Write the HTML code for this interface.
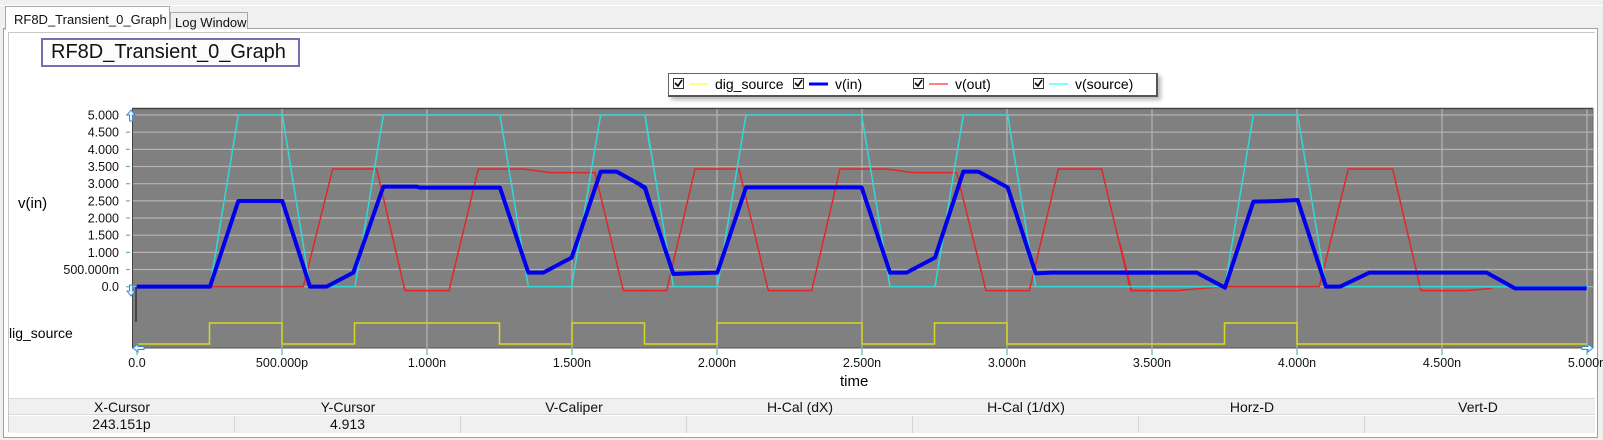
<!DOCTYPE html>
<html><head><meta charset="utf-8"><style>
*{margin:0;padding:0;box-sizing:border-box}
body{width:1603px;height:440px;background:#f0f0f0;position:relative;overflow:hidden;font-family:"Liberation Sans",sans-serif;color:#111}
.a{position:absolute}
</style></head><body>
<div class="a" style="left:0;top:5px;width:1603px;height:1px;background:#fff"></div>
<div class="a" style="left:3px;top:28px;width:1595px;height:410px;border:1px solid #a0a0a0;background:#fff"></div>
<div class="a" style="left:8px;top:32px;width:1587px;height:1px;background:#c8c8c8"></div>
<div class="a" style="left:8px;top:32px;width:1px;height:400px;background:#c8c8c8"></div>
<!-- tabs -->
<div class="a" style="left:5px;top:6px;width:165px;height:24px;background:#fff;border:1px solid #a8a8a8;border-bottom:none;font-size:13px;padding:5px 0 0 8px">RF8D_Transient_0_Graph</div>
<div class="a" style="left:170px;top:12px;width:78px;height:17px;background:#f0f0f0;border:1px solid #a8a8a8;border-bottom:none;font-size:13px;padding:2px 0 0 4px">Log Window</div>
<!-- title -->
<div class="a" style="left:41px;top:38px;width:259px;height:29px;border:2px solid #7070b0;font-size:20px;padding:1px 0 0 8px;background:#fcfcfc">RF8D_Transient_0_Graph</div>
<!-- legend -->
<div class="a" style="left:668px;top:73px;width:490px;height:24px;border:1px solid #666;border-right:2px solid #555;border-bottom:2px solid #555;box-shadow:3px 3px 4px #bbb;background:#fff;font-size:13px">
<svg width="490" height="22" style="position:absolute;left:0;top:0">
<g fill="#fff" stroke="#333"><rect x="4.5" y="4.5" width="10" height="10"/><rect x="124.5" y="4.5" width="10" height="10"/><rect x="244.5" y="4.5" width="10" height="10"/><rect x="364.5" y="4.5" width="10" height="10"/></g>
<g fill="none" stroke="#000" stroke-width="1.6"><path d="M6 9l3 3 4-6"/><path d="M126 9l3 3 4-6"/><path d="M246 9l3 3 4-6"/><path d="M366 9l3 3 4-6"/></g>
<line x1="20" y1="10" x2="39" y2="10" stroke="#ffff80" stroke-width="2"/>
<line x1="140" y1="10" x2="159" y2="10" stroke="#0000ff" stroke-width="3"/>
<line x1="260" y1="10" x2="279" y2="10" stroke="#ff8080" stroke-width="2"/>
<line x1="380" y1="10" x2="399" y2="10" stroke="#80ffff" stroke-width="2"/>
<text x="46" y="15" font-size="14" font-family="Liberation Sans">dig_source</text>
<text x="166" y="15" font-size="14" font-family="Liberation Sans">v(in)</text>
<text x="286" y="15" font-size="14" font-family="Liberation Sans">v(out)</text>
<text x="406" y="15" font-size="14" font-family="Liberation Sans">v(source)</text>
</svg></div>
<!-- plot -->
<svg class="a" style="left:0;top:0" width="1603" height="440" font-family="Liberation Sans">
<rect x="132" y="108" width="1461" height="240" fill="#808080"/>
<line x1="132" y1="108.5" x2="1593" y2="108.5" stroke="#444" stroke-width="1.5"/>
<line x1="1593" y1="108" x2="1593" y2="348" stroke="#666" stroke-width="1"/>
<line x1="132.5" y1="108" x2="132.5" y2="348" stroke="#444"/>
<line x1="132" y1="348" x2="1593" y2="348" stroke="#555"/>
<g stroke="#b4b4b4" stroke-width="1.2">
<line x1="133" x2="1593" y1="115" y2="115"/><line x1="133" x2="1593" y1="132.2" y2="132.2"/><line x1="133" x2="1593" y1="149.4" y2="149.4"/><line x1="133" x2="1593" y1="166.5" y2="166.5"/><line x1="133" x2="1593" y1="183.7" y2="183.7"/><line x1="133" x2="1593" y1="200.9" y2="200.9"/><line x1="133" x2="1593" y1="218" y2="218"/><line x1="133" x2="1593" y1="235.2" y2="235.2"/><line x1="133" x2="1593" y1="252.4" y2="252.4"/><line x1="133" x2="1593" y1="269.5" y2="269.5"/><line x1="133" x2="1593" y1="286.7" y2="286.7"/>
<line y1="109" y2="348" x1="282" x2="282"/><line y1="109" y2="348" x1="427" x2="427"/><line y1="109" y2="348" x1="572" x2="572"/><line y1="109" y2="348" x1="717" x2="717"/><line y1="109" y2="348" x1="862" x2="862"/><line y1="109" y2="348" x1="1007" x2="1007"/><line y1="109" y2="348" x1="1152" x2="1152"/><line y1="109" y2="348" x1="1297" x2="1297"/><line y1="109" y2="348" x1="1442" x2="1442"/><line y1="109" y2="348" x1="1587" x2="1587"/>
</g>
<line x1="136" y1="287" x2="136" y2="322" stroke="#333" stroke-width="1.5"/>
<!-- y ticks -->
<g stroke="#5fb5b5" stroke-width="1.2">
<line x1="126" x2="130" y1="115" y2="115"/><line x1="126" x2="130" y1="132.2" y2="132.2"/><line x1="126" x2="130" y1="149.4" y2="149.4"/><line x1="126" x2="130" y1="166.5" y2="166.5"/><line x1="126" x2="130" y1="183.7" y2="183.7"/><line x1="126" x2="130" y1="200.9" y2="200.9"/><line x1="126" x2="130" y1="218" y2="218"/><line x1="126" x2="130" y1="235.2" y2="235.2"/><line x1="126" x2="130" y1="252.4" y2="252.4"/><line x1="126" x2="130" y1="269.5" y2="269.5"/><line x1="126" x2="130" y1="286.7" y2="286.7"/>
<line y1="349" y2="355" x1="137" x2="137"/><line y1="349" y2="355" x1="282" x2="282"/><line y1="349" y2="355" x1="427" x2="427"/><line y1="349" y2="355" x1="572" x2="572"/><line y1="349" y2="355" x1="717" x2="717"/><line y1="349" y2="355" x1="862" x2="862"/><line y1="349" y2="355" x1="1007" x2="1007"/><line y1="349" y2="355" x1="1152" x2="1152"/><line y1="349" y2="355" x1="1297" x2="1297"/><line y1="349" y2="355" x1="1442" x2="1442"/><line y1="349" y2="355" x1="1587" x2="1587"/>
</g>
<g font-size="12.5" text-anchor="end" fill="#111">
<text x="119" y="119.5">5.000</text><text x="119" y="136.7">4.500</text><text x="119" y="153.9">4.000</text><text x="119" y="171">3.500</text><text x="119" y="188.2">3.000</text><text x="119" y="205.4">2.500</text><text x="119" y="222.5">2.000</text><text x="119" y="239.7">1.500</text><text x="119" y="256.9">1.000</text><text x="119" y="274">500.000m</text><text x="119" y="291.2">0.0</text>
</g>
<g font-size="12.5" text-anchor="middle" fill="#111">
<text x="137" y="367">0.0</text><text x="282" y="367">500.000p</text><text x="427" y="367">1.000n</text><text x="572" y="367">1.500n</text><text x="717" y="367">2.000n</text><text x="862" y="367">2.500n</text><text x="1007" y="367">3.000n</text><text x="1152" y="367">3.500n</text><text x="1297" y="367">4.000n</text><text x="1442" y="367">4.500n</text><text x="1587" y="367">5.000n</text>
</g>
<text x="840" y="386" font-size="15">time</text>
<text x="18" y="208" font-size="15">v(in)</text>
<text x="9" y="338" font-size="14">lig_source</text>
<!-- digital -->
<polyline fill="none" stroke="#d8d820" stroke-width="1.5" points="137,344 209.5,344 209.5,323 282,323 282,344 354.5,344 354.5,323 499.5,323 499.5,344 572,344 572,323 644.5,323 644.5,344 717,344 717,323 862,323 862,344 934.5,344 934.5,323 1007,323 1007,344 1224.5,344 1224.5,323 1297,323 1297,344 1588,344"/>
<!-- zoom5 region -->
<g transform="translate(130,100) scale(0.33333)" fill="none" stroke-linejoin="round">
<polyline vector-effect="non-scaling-stroke" stroke="#e02828" stroke-width="1.5" points="20,560 520,560 608,207 740,207 825,572 957,572 1045,207 1180,207 1260,218 1395,218 1480,572 1560,572"/>
<polyline vector-effect="non-scaling-stroke" stroke="#30d8d8" stroke-width="1.5" points="20,560 240,560 325,45 457,45 540,560 675,560 760,45 1110,45 1195,560 1325,560 1412,45 1545,45 1560,145"/>
<polyline vector-effect="non-scaling-stroke" stroke="#0000ee" stroke-width="4" points="20,560 240,560 325,303 457,303 540,560 590,560 670,518 760,260 860,260 870,263 1110,263 1195,518 1240,518 1325,473 1412,215 1460,215 1545,262 1560,310"/>
</g>
<g transform="translate(640,100) scale(0.33333)" fill="none" stroke-linejoin="round">
<polyline vector-effect="non-scaling-stroke" stroke="#e02828" stroke-width="1.5" points="0,572 80,572 165,207 297,207 385,572 515,572 600,207 740,207 820,218 950,218 1038,572 1168,572 1255,207 1385,207 1472,572 1560,572"/>
<polyline vector-effect="non-scaling-stroke" stroke="#30d8d8" stroke-width="1.5" points="15,45 100,560 232,560 318,45 665,45 750,560 885,560 970,45 1103,45 1187,560 1560,560"/>
<polyline vector-effect="non-scaling-stroke" stroke="#0000ee" stroke-width="4" points="0,255 15,265 100,522 145,520 232,518 318,262 665,262 750,518 800,518 885,473 970,215 1015,215 1103,262 1187,520 1235,518 1560,518"/>
</g>
<g transform="translate(1120,100) scale(0.33333)" fill="none" stroke-linejoin="round">
<polyline vector-effect="non-scaling-stroke" stroke="#e02828" stroke-width="1.5" points="0,430 35,572 170,572 245,565 320,560 598,560 685,207 818,207 903,572 1040,572 1115,565"/>
<polyline vector-effect="non-scaling-stroke" stroke="#30d8d8" stroke-width="1.5" points="0,560 315,560 400,45 533,45 618,560 1405,560"/>
<polyline vector-effect="non-scaling-stroke" stroke="#0000ee" stroke-width="4" points="0,518 230,518 315,563 400,305 475,303 533,300 618,560 660,560 748,518 1100,518 1185,565 1400,565"/>
</g>
<!-- arrows -->
<g fill="#e8f4ff" stroke="#3a8ad8" stroke-width="1">
<path d="M131 110l-4 5h2.5v6h3v-6h2.5z"/>
<path d="M131 296l-4 -5h2.5v-6h3v6h2.5z"/>
<path d="M133 348l5 -4v2.5h6v3h-6v2.5z"/>
<path d="M1593 348l-5 -4v2.5h-6v3h6v2.5z"/>
</g>
</svg>
<!-- table -->
<div class="a" style="left:9px;top:398px;width:1586px;height:1px;background:#d8d8d8"></div>
<div class="a" style="left:9px;top:399px;width:1586px;height:16px;background:#f0f0f0;border-bottom:1px solid #d8d8d8;font-size:14px;display:flex">
<div style="width:226px;text-align:center">X-Cursor</div><div style="width:226px;text-align:center">Y-Cursor</div><div style="width:226px;text-align:center">V-Caliper</div><div style="width:226px;text-align:center">H-Cal (dX)</div><div style="width:226px;text-align:center">H-Cal (1/dX)</div><div style="width:226px;text-align:center">Horz-D</div><div style="width:226px;text-align:center">Vert-D</div></div>
<div class="a" style="left:9px;top:416px;width:1586px;height:17px;background:#f0f0f0;font-size:14px;display:flex">
<div style="width:226px;text-align:center;border-right:1px solid #d4d4d4">243.151p</div><div style="width:226px;text-align:center;border-right:1px solid #d4d4d4">4.913</div><div style="width:226px;border-right:1px solid #d4d4d4"></div><div style="width:226px;border-right:1px solid #d4d4d4"></div><div style="width:226px;border-right:1px solid #d4d4d4"></div><div style="width:226px;border-right:1px solid #d4d4d4"></div><div style="width:226px"></div></div>
</body></html>
